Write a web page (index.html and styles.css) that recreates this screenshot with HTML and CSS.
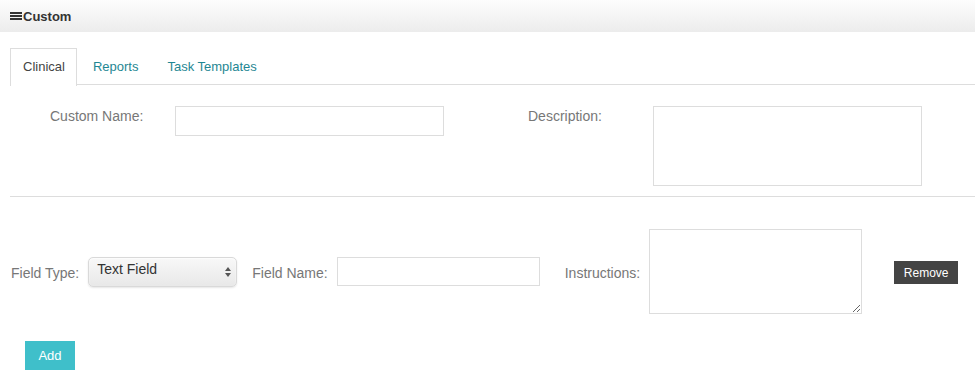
FILE: index.html
```html
<!DOCTYPE html>
<html lang="en">
<head>
    <meta charset="UTF-8">
    <title>Custom</title>
    <link rel="stylesheet" href="styles.css">
</head>
<body>
    <div class="panel-heading">
        <span class="menu-icon"><i></i><i></i><i></i></span>Custom
    </div>

    <div class="panel-body">
        <ul class="tabs">
            <li class="active"><a href="#">Clinical</a></li>
            <li><a href="#">Reports</a></li>
            <li><a href="#">Task Templates</a></li>
        </ul>

        <div class="custom-row">
            <div class="half">
                <label class="top-label">Custom Name:</label>
                <input type="text" class="name-input">
            </div>
            <div class="half">
                <label class="top-label">Description:</label>
                <textarea class="desc-input"></textarea>
            </div>
        </div>

        <hr class="divider">

        <div class="field-row">
            <label class="row-label">Field Type:</label>
            <div class="select-wrap">
                <select class="field-type">
                    <option>Text Field</option>
                </select>
            </div>
            <label class="row-label name-label">Field Name:</label>
            <input type="text" class="field-name">
            <label class="row-label instr-label">Instructions:</label>
            <textarea class="instructions"></textarea>
            <button class="button-remove">Remove</button>
        </div>

        <button class="button-add">Add</button>
    </div>
</body>
</html>
```

FILE: styles.css
```css
body {
    font-family: "Liberation Sans", Arial, sans-serif;
    margin: 0;
    background-color: #fff;
    color: #777;
}
.panel-heading {
    height: 32px;
    display: flex;
    align-items: center;
    padding-left: 10px;
    font-size: 13px;
    font-weight: bold;
    color: #333;
    background: linear-gradient(to bottom, #fdfdfd, #ececec);
}
.menu-icon {
    display: flex;
    flex-direction: column;
    justify-content: space-between;
    width: 12px;
    height: 8px;
    margin-right: 1px;
}
.menu-icon i {
    display: block;
    height: 2px;
    background-color: #333;
}
.panel-body {
    padding: 16px 0 0 10px;
}
.tabs {
    list-style: none;
    margin: 0;
    padding: 0;
    display: flex;
    border-bottom: 1px solid #ddd;
    height: 36px;
}
.tabs li {
    margin-bottom: -1px;
}
.tabs a {
    display: block;
    height: 36px;
    line-height: 36px;
    padding: 0 12px 0 15px;
    font-size: 13px;
    color: #1f8793;
    text-decoration: none;
    border: 1px solid transparent;
    border-bottom: none;
}
.tabs li.active a {
    color: #444;
    background-color: #fff;
    border-color: #ddd;
    height: 37px;
    padding: 0 11px 0 12px;
}
.custom-row {
    display: flex;
    padding-top: 21px;
}
.half {
    width: 478px;
    display: flex;
    align-items: flex-start;
}
.top-label {
    width: 125px;
    padding-left: 40px;
    padding-top: 2px;
    font-size: 14px;
}
input,
textarea {
    box-sizing: border-box;
    border: 1px solid #ddd;
    font-family: inherit;
    margin: 0;
    padding: 4px 6px;
    background-color: #fff;
}
.name-input {
    width: 269px;
    height: 30px;
}
.desc-input {
    width: 269px;
    height: 80px;
    resize: none;
}
.divider {
    border: none;
    border-top: 1px solid #ddd;
    margin: 10px 0 0;
}
.field-row {
    display: flex;
    align-items: center;
    margin-top: 32px;
}
.row-label {
    font-size: 14px;
    margin-left: 1px;
    padding-top: 2px;
}
.select-wrap {
    position: relative;
    margin-left: 9px;
}
.select-wrap::before,
.select-wrap::after {
    content: "";
    position: absolute;
    right: 6px;
    border-left: 3px solid transparent;
    border-right: 3px solid transparent;
    pointer-events: none;
}
.select-wrap::before {
    top: 10px;
    border-bottom: 4px solid #555;
}
.select-wrap::after {
    top: 16px;
    border-top: 4px solid #555;
}
.field-type {
    -webkit-appearance: none;
    appearance: none;
    width: 149px;
    height: 30px;
    padding: 0 8px 6px;
    font-family: inherit;
    font-size: 14px;
    color: #333;
    border: 1px solid #d9d9d9;
    border-radius: 5px;
    background: linear-gradient(to bottom, #f8f8f8, #e8e8e8);
    box-shadow: inset 0 1px 2px rgba(255, 255, 255, 0.8), 0 1px 2px rgba(0, 0, 0, 0.1);
}
.name-label {
    margin-left: 15px;
}
.field-name {
    margin-left: 9px;
    width: 203px;
    height: 29px;
}
.instr-label {
    margin-left: 25px;
}
.instructions {
    margin-left: 9px;
    width: 213px;
    height: 85px;
}
.button-remove {
    margin-left: 32px;
    margin-top: 2px;
    width: 64px;
    height: 23px;
    border: none;
    background-color: #444;
    color: #fff;
    font-family: inherit;
    font-size: 12px;
    padding: 0;
    cursor: pointer;
}
.button-add {
    display: block;
    margin: 27px 0 0 15px;
    width: 50px;
    height: 29px;
    border: none;
    background-color: #3fbfca;
    color: #fff;
    font-family: inherit;
    font-size: 13px;
    padding: 0;
    cursor: pointer;
}
```
